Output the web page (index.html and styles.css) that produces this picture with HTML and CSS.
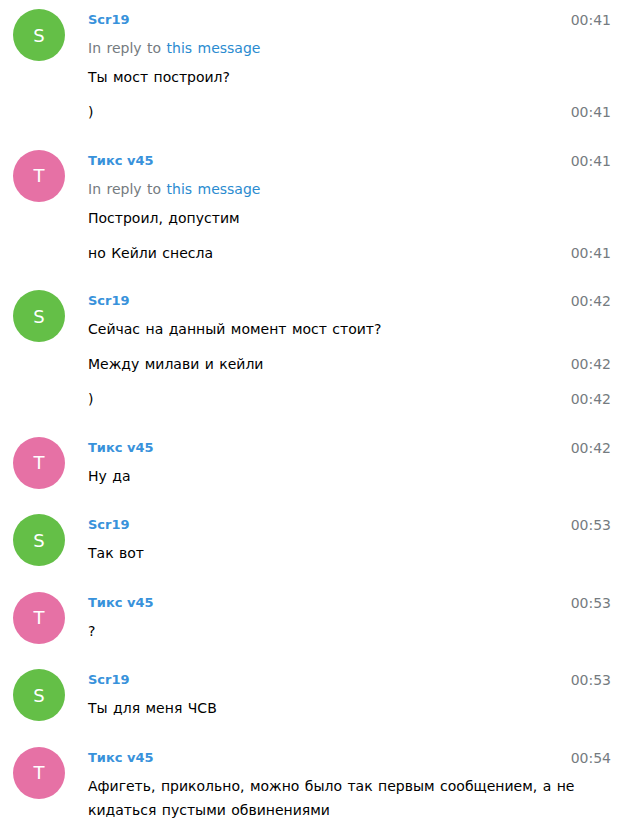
FILE: index.html
```html
<!DOCTYPE html>
<html lang="ru">
<head>
  <meta charset="UTF-8" />
  <meta name="viewport" content="width=device-width, initial-scale=1.0"/>
  <title>Chat history</title>
  <link rel="stylesheet" href="styles.css">
</head>
<body>
  <div class="history">

    <div class="message">
      <div class="userpic green">S</div>
      <div class="body">
        <div class="head"><span class="from-name">Scr19</span><span class="date">00:41</span></div>
        <div class="reply-to">In reply to <a href="#">this message</a></div>
        <div class="text">Ты мост построил?</div>
        <div class="joined"><span class="text">)</span><span class="date">00:41</span></div>
      </div>
    </div>

    <div class="message">
      <div class="userpic pink">T</div>
      <div class="body">
        <div class="head"><span class="from-name">Тикс v45</span><span class="date">00:41</span></div>
        <div class="reply-to">In reply to <a href="#">this message</a></div>
        <div class="text">Построил, допустим</div>
        <div class="joined"><span class="text">но Кейли снесла</span><span class="date">00:41</span></div>
      </div>
    </div>

    <div class="message">
      <div class="userpic green">S</div>
      <div class="body">
        <div class="head"><span class="from-name">Scr19</span><span class="date">00:42</span></div>
        <div class="text">Сейчас на данный момент мост стоит?</div>
        <div class="joined"><span class="text">Между милави и кейли</span><span class="date">00:42</span></div>
        <div class="joined"><span class="text">)</span><span class="date">00:42</span></div>
      </div>
    </div>

    <div class="message">
      <div class="userpic pink">T</div>
      <div class="body">
        <div class="head"><span class="from-name">Тикс v45</span><span class="date">00:42</span></div>
        <div class="text">Ну да</div>
      </div>
    </div>

    <div class="message">
      <div class="userpic green">S</div>
      <div class="body">
        <div class="head"><span class="from-name">Scr19</span><span class="date">00:53</span></div>
        <div class="text">Так вот</div>
      </div>
    </div>

    <div class="message">
      <div class="userpic pink">T</div>
      <div class="body">
        <div class="head"><span class="from-name">Тикс v45</span><span class="date">00:53</span></div>
        <div class="text">?</div>
      </div>
    </div>

    <div class="message">
      <div class="userpic green">S</div>
      <div class="body">
        <div class="head"><span class="from-name">Scr19</span><span class="date">00:53</span></div>
        <div class="text">Ты для меня ЧСВ</div>
      </div>
    </div>

    <div class="message">
      <div class="userpic pink">T</div>
      <div class="body">
        <div class="head"><span class="from-name">Тикс v45</span><span class="date">00:54</span></div>
        <div class="text">Афигеть, прикольно, можно было так первым сообщением, а не кидаться пустыми обвинениями</div>
      </div>
    </div>

  </div>
</body>
</html>
```

FILE: styles.css
```css
body {
  margin: 0;
  padding: 0;
  background: #fff;
  color: #000;
  font-family: "DejaVu Sans", Verdana, sans-serif;
  font-size: 14px;
}

.message {
  display: flex;
  padding: 9px 33px 16.5px 13px;
}

.userpic {
  flex: none;
  width: 52px;
  height: 52px;
  margin-right: 23px;
  border-radius: 50%;
  display: flex;
  align-items: center;
  justify-content: center;
  color: #fff;
  font-size: 18px;
}

.userpic.green { background: #64bf47; }
.userpic.pink { background: #e671a5; }

.body {
  flex: 1;
  min-width: 0;
}

.head {
  display: flex;
  justify-content: space-between;
  align-items: center;
  line-height: 22px;
  margin-bottom: 5px;
}

.from-name {
  color: #3892db;
  font-weight: bold;
  font-size: 13px;
}

.date {
  color: #757b80;
}

.reply-to {
  color: #757b80;
  line-height: 24px;
  margin-bottom: 5px;
  word-spacing: 1px;
}

.reply-to a {
  color: #2a8bd0;
  text-decoration: none;
}

.text {
  line-height: 24px;
  word-spacing: 1px;
  word-wrap: break-word;
}

.joined {
  display: flex;
  justify-content: space-between;
  margin-top: 11px;
  line-height: 24px;
}
```
